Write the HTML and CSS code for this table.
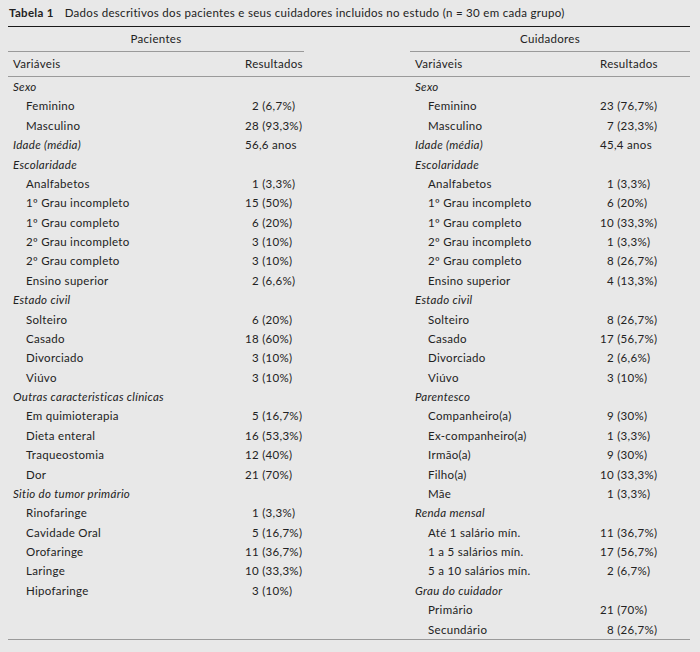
FILE: index.html
```html
<!DOCTYPE html>
<html lang="pt">
<head>
<meta charset="utf-8">
<link rel="stylesheet" href="styles.css">
</head>
<body>
<div class="page">
  <p class="caption"><b>Tabela 1</b><span class="cap-text">Dados descritivos dos pacientes e seus cuidadores incluidos no estudo (n = 30 em cada grupo)</span></p>
  <table class="tbl">
    <colgroup>
      <col class="c-lab-l"><col class="c-val-l"><col class="c-gap"><col class="c-lab-r"><col class="c-val-r">
    </colgroup>
    <thead>
      <tr class="group">
        <th colspan="2" class="grp">Pacientes</th>
        <th class="gap"></th>
        <th colspan="2" class="grp">Cuidadores</th>
      </tr>
      <tr class="heads">
        <th class="lab">Variáveis</th><th class="val">Resultados</th>
        <th class="gap"></th>
        <th class="lab">Variáveis</th><th class="val">Resultados</th>
      </tr>
    </thead>
    <tbody>
      <tr><td class="cat">Sexo</td><td></td><td></td><td class="cat">Sexo</td><td></td></tr>
      <tr><td class="sub">Feminino</td><td class="val">&#8199;2 (6,7%)</td><td></td><td class="sub">Feminino</td><td class="val">23 (76,7%)</td></tr>
      <tr><td class="sub">Masculino</td><td class="val">28 (93,3%)</td><td></td><td class="sub">Masculino</td><td class="val">&#8199;7 (23,3%)</td></tr>
      <tr><td class="cat">Idade (média)</td><td class="val">56,6 anos</td><td></td><td class="cat">Idade (média)</td><td class="val">45,4 anos</td></tr>
      <tr><td class="cat">Escolaridade</td><td></td><td></td><td class="cat">Escolaridade</td><td></td></tr>
      <tr><td class="sub">Analfabetos</td><td class="val">&#8199;1 (3,3%)</td><td></td><td class="sub">Analfabetos</td><td class="val">&#8199;1 (3,3%)</td></tr>
      <tr><td class="sub">1º Grau incompleto</td><td class="val">15 (50%)</td><td></td><td class="sub">1º Grau incompleto</td><td class="val">&#8199;6 (20%)</td></tr>
      <tr><td class="sub">1º Grau completo</td><td class="val">&#8199;6 (20%)</td><td></td><td class="sub">1º Grau completo</td><td class="val">10 (33,3%)</td></tr>
      <tr><td class="sub">2º Grau incompleto</td><td class="val">&#8199;3 (10%)</td><td></td><td class="sub">2º Grau incompleto</td><td class="val">&#8199;1 (3,3%)</td></tr>
      <tr><td class="sub">2º Grau completo</td><td class="val">&#8199;3 (10%)</td><td></td><td class="sub">2º Grau completo</td><td class="val">&#8199;8 (26,7%)</td></tr>
      <tr><td class="sub">Ensino superior</td><td class="val">&#8199;2 (6,6%)</td><td></td><td class="sub">Ensino superior</td><td class="val">&#8199;4 (13,3%)</td></tr>
      <tr><td class="cat">Estado civil</td><td></td><td></td><td class="cat">Estado civil</td><td></td></tr>
      <tr><td class="sub">Solteiro</td><td class="val">&#8199;6 (20%)</td><td></td><td class="sub">Solteiro</td><td class="val">&#8199;8 (26,7%)</td></tr>
      <tr><td class="sub">Casado</td><td class="val">18 (60%)</td><td></td><td class="sub">Casado</td><td class="val">17 (56,7%)</td></tr>
      <tr><td class="sub">Divorciado</td><td class="val">&#8199;3 (10%)</td><td></td><td class="sub">Divorciado</td><td class="val">&#8199;2 (6,6%)</td></tr>
      <tr><td class="sub">Viúvo</td><td class="val">&#8199;3 (10%)</td><td></td><td class="sub">Viúvo</td><td class="val">&#8199;3 (10%)</td></tr>
      <tr><td class="cat">Outras caracteristicas clínicas</td><td></td><td></td><td class="cat">Parentesco</td><td></td></tr>
      <tr><td class="sub">Em quimioterapia</td><td class="val">&#8199;5 (16,7%)</td><td></td><td class="sub">Companheiro(a)</td><td class="val">&#8199;9 (30%)</td></tr>
      <tr><td class="sub">Dieta enteral</td><td class="val">16 (53,3%)</td><td></td><td class="sub">Ex-companheiro(a)</td><td class="val">&#8199;1 (3,3%)</td></tr>
      <tr><td class="sub">Traqueostomia</td><td class="val">12 (40%)</td><td></td><td class="sub">Irmão(a)</td><td class="val">&#8199;9 (30%)</td></tr>
      <tr><td class="sub">Dor</td><td class="val">21 (70%)</td><td></td><td class="sub">Filho(a)</td><td class="val">10 (33,3%)</td></tr>
      <tr><td class="cat">Sitio do tumor primário</td><td></td><td></td><td class="sub">Mãe</td><td class="val">&#8199;1 (3,3%)</td></tr>
      <tr><td class="sub">Rinofaringe</td><td class="val">&#8199;1 (3,3%)</td><td></td><td class="cat">Renda mensal</td><td></td></tr>
      <tr><td class="sub">Cavidade Oral</td><td class="val">&#8199;5 (16,7%)</td><td></td><td class="sub">Até 1 salário mín.</td><td class="val">11 (36,7%)</td></tr>
      <tr><td class="sub">Orofaringe</td><td class="val">11 (36,7%)</td><td></td><td class="sub">1 a 5 salários mín.</td><td class="val">17 (56,7%)</td></tr>
      <tr><td class="sub">Laringe</td><td class="val">10 (33,3%)</td><td></td><td class="sub">5 a 10 salários mín.</td><td class="val">&#8199;2 (6,7%)</td></tr>
      <tr><td class="sub">Hipofaringe</td><td class="val">&#8199;3 (10%)</td><td></td><td class="cat">Grau do cuidador</td><td></td></tr>
      <tr><td></td><td></td><td></td><td class="sub">Primário</td><td class="val">21 (70%)</td></tr>
      <tr><td></td><td></td><td></td><td class="sub">Secundário</td><td class="val">&#8199;8 (26,7%)</td></tr>
    </tbody>
  </table>
</div>
</body>
</html>
```
FILE: styles.css
```css
html, body {
  margin: 0;
  padding: 0;
}
body {
  background: #e8e8e8;
  width: 700px;
  height: 652px;
  overflow: hidden;
  font-family: "Lato", "Liberation Sans", sans-serif;
  font-size: 11.5px;
  letter-spacing: 0.3px;
  color: #222;
}
.page {
  padding: 0 10px 0 8px;
}
.caption {
  margin: 0;
  height: 26px;
  line-height: 26px;
  padding-left: 1px;
  border-bottom: 1px solid #1a1a1a;
  white-space: nowrap;
}
.caption b {
  font-weight: bold;
}
.cap-text {
  margin-left: 11px;
}
.tbl {
  width: 682px;
  border-collapse: collapse;
  table-layout: fixed;
}
.c-lab-l { width: 237px; }
.c-val-l { width: 59px; }
.c-gap { width: 106px; }
.c-lab-r { width: 190px; }
.c-val-r { width: 90px; }
.tbl th {
  font-weight: normal;
  padding: 0;
  text-align: left;
}
.group th {
  height: 24px;
  line-height: 24px;
}
.group .grp {
  text-align: center;
  border-bottom: 1px solid #9a9a9a;
}
.heads th {
  height: 24px;
  line-height: 24px;
  border-bottom: 1px solid #9a9a9a;
}
.tbl td {
  padding: 0;
  height: 19.38px;
  line-height: 19.38px;
  white-space: nowrap;
}
.tbl .lab { padding-left: 5px; }
.tbl .cat {
  font-style: italic;
  padding-left: 5px;
}
.tbl .sub { padding-left: 18px; }
.tbl tbody tr:last-child td {
  border-bottom: 1px solid #9a9a9a;
}
```
